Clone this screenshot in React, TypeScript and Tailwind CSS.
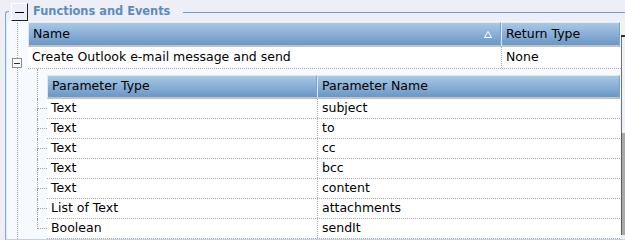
const params = [
  ["Text", "subject"],
  ["Text", "to"],
  ["Text", "cc"],
  ["Text", "bcc"],
  ["Text", "content"],
  ["List of Text", "attachments"],
  ["Boolean", "sendIt"],
];

function HeaderCell({ label, className = "", sorted = false }: { label: string; className?: string; sorted?: boolean }) {
  return (
    <div
      className={
        "flex items-center justify-between bg-linear-to-b from-[#a9c8e6] to-[#6a97c5] border-t border-l border-[#dce8f4] border-r border-r-[#7fa2c9] border-b-2 border-b-[#c2c2c2] pl-[4px] pr-[8px] " +
        className
      }
    >
      <span>{label}</span>
      {sorted && (
        <svg width="8" height="7" viewBox="0 0 8 7">
          <path d="M4 0.5 L7.5 6.5 L0.5 6.5 Z" fill="none" stroke="#ffffff" strokeWidth="1" />
        </svg>
      )}
    </div>
  );
}

export default function App() {
  return (
    <div className="w-[625px] h-[240px] bg-[#eeeef6] flex flex-col overflow-hidden text-[12.5px] text-black font-['DejaVu_Sans',sans-serif]">
      {/* group legend */}
      <div className="h-[21px] flex items-start pl-[5px] shrink-0">
        <div className="mt-[11px] w-[4px] h-[10px] border-l border-t border-[#7fa3c9] rounded-tl-[3px]" />
        <button className="ml-[2px] mt-[3px] w-[17px] h-[18px] flex items-center justify-center bg-[#eeeef6] border border-t-[#ffffff] border-l-[#ffffff] border-r-[#202020] border-b-[#202020]">
          <span className="block w-[9px] h-[1px] bg-black" />
        </button>
        <span className="ml-[5px] mt-[3px] font-bold text-[11.4px] text-[#5c8cbf] leading-[16px]">Functions and Events</span>
        <div className="flex-1 ml-[13px] mt-[12px] border-t border-[#6b9bcb]" />
      </div>

      {/* panel */}
      <div className="flex-1 flex ml-[5px] border-l border-[#8ea8c8]">
        <div className="flex-1 flex bg-[#f6f9fe] border-l border-[#dde6f1] border-b border-b-[#c3d1e2]">
          {/* outer tree gutter */}
          <div className="w-[21px] flex flex-col pl-[10px]">
            <div className="h-[35px] mt-[2px] border-l border-dotted border-[#a0a0a0]" />
            <div className="-ml-[5px] w-[10px] h-[10px] border border-[#8e8e8e] bg-white flex items-center justify-center">
              <span className="block w-[6px] h-[1px] bg-[#303030]" />
            </div>
            <div className="flex-1 border-l border-dotted border-[#a0a0a0]" />
          </div>

          {/* content */}
          <div className="flex-1 flex flex-col pt-[1px]">
            <div className="flex h-[25px]">
              <HeaderCell label="Name" className="w-[473px]" sorted />
              <HeaderCell label="Return Type" className="w-[119px]" />
            </div>
            <div className="flex h-[22px] bg-white border-b border-dotted border-[#a8a8a8]">
              <div className="w-[473px] pl-[4px] flex items-center">Create Outlook e-mail message and send</div>
              <div className="flex-1 pl-[4px] flex items-center border-l border-dotted border-[#a8a8a8]">None</div>
            </div>

            {/* nested parameters */}
            <div className="flex-1 flex">
              <div className="w-[19px] pl-[9px] flex flex-col">
                <div className="h-[30px] border-l border-dotted border-[#a0a0a0]" />
                {params.map((p, i) => (
                  <div key={p[1]} className="h-[20px] flex flex-col">
                    <div className="h-[10px] border-l border-b border-dotted border-[#a0a0a0]" />
                    {i < params.length - 1 && <div className="h-[10px] border-l border-dotted border-[#a0a0a0]" />}
                  </div>
                ))}
              </div>
              <div className="flex-1 flex flex-col pt-[6px] pr-[1px]">
                <div className="flex h-[24px]">
                  <HeaderCell label="Parameter Type" className="w-[270px]" />
                  <HeaderCell label="Parameter Name" className="flex-1" />
                </div>
                {params.map((p) => (
                  <div key={p[1]} className="flex h-[20px] bg-white border-b border-dotted border-[#a8a8a8]">
                    <div className="w-[270px] pl-[4px] flex items-center">{p[0]}</div>
                    <div className="flex-1 pl-[4px] flex items-center border-l border-dotted border-[#a8a8a8]">{p[1]}</div>
                  </div>
                ))}
              </div>
            </div>
          </div>

          {/* clipped scrollbar */}
          <div className="w-[4px] flex flex-col">
            <div className="h-[16px] bg-[#f2f2f2] border-b-2 border-[#303030]" />
            <div className="h-[96px] border-l border-[#707070] bg-[#eef2f8]" />
            <div className="flex-1 bg-[#a9a9a9] border-l border-[#5a5a5a]" />
            <div className="h-[4px] bg-[#f0f0f0]" />
          </div>
        </div>
      </div>
    </div>
  );
}
